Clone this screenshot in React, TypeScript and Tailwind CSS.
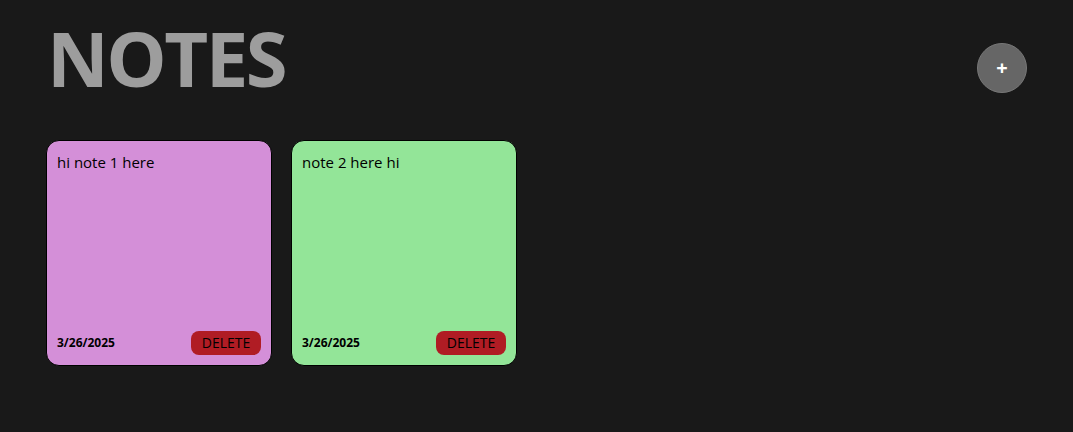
import React from "react";

const notes = [
  { id: 1, text: "hi note 1 here", date: "3/26/2025", color: "bg-[#d48fd8]" },
  { id: 2, text: "note 2 here hi", date: "3/26/2025", color: "bg-[#93e598]" },
];

const App = () => {
  return (
    <div className="min-h-[432px] w-full bg-[#191919] font-['Open_Sans',sans-serif]">
      <div className="flex items-start justify-between pl-[47px] pr-[46px] pt-[12px]">
        <h1 className="text-[76px] font-bold leading-[92px] tracking-[-2.5px] text-[#9d9d9d]">NOTES</h1>
        <button className="mt-[31px] flex h-[50px] w-[50px] items-center justify-center rounded-full border border-[#777] bg-[#666666] text-[20px] font-bold text-white">
          +
        </button>
      </div>
      <div className="mt-[36px] flex gap-[19px] px-[46px]">
        {notes.map((n) => (
          <div
            key={n.id}
            className={`flex h-[226px] w-[226px] flex-col justify-between rounded-[13px] border border-black p-[10px] ${n.color}`}
          >
            <p className="text-[15px] leading-[22px] text-black">{n.text}</p>
            <div className="flex items-center justify-between">
              <span className="text-[12px] font-bold text-black">{n.date}</span>
              <button className="h-[24px] w-[70px] rounded-[8px] bg-[#b01c24] text-[14px] leading-[24px] text-black">
                DELETE
              </button>
            </div>
          </div>
        ))}
      </div>
    </div>
  );
};

export default App;
